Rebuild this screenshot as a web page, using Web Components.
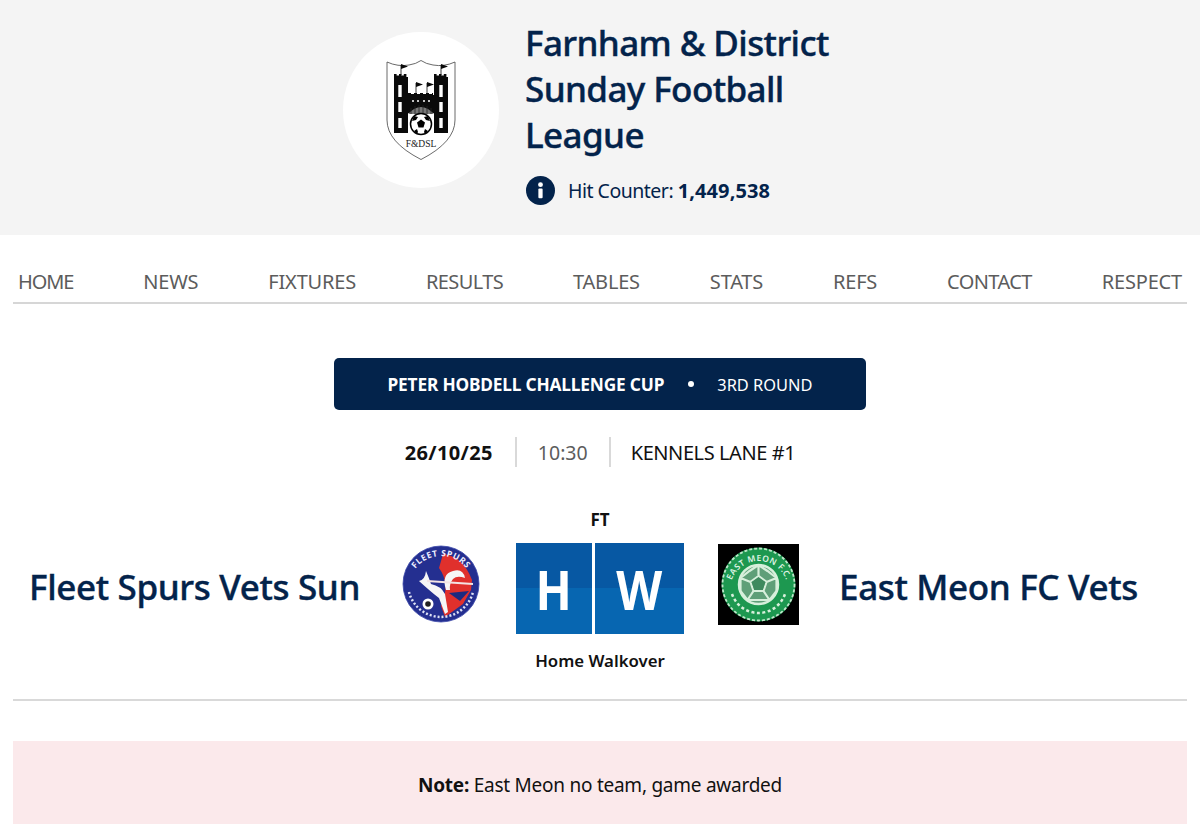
<!DOCTYPE html>
<html lang="en"><head><meta charset="utf-8"><title>Match</title>
<style>
html,body{margin:0;padding:0;background:#fff}
body{font-family:"Noto Sans","Open Sans",sans-serif;width:1200px;height:832px;overflow:hidden}
</style></head><body>
<league-header></league-header>
<main-nav></main-nav>
<cup-banner><b slot="a">PETER HOBDELL CHALLENGE CUP</b><span slot="b">3RD ROUND</span></cup-banner>
<match-meta></match-meta>
<score-board></score-board>
<note-box><b>Note:</b> East Meon no team, game awarded</note-box>

<template id="crest"><svg viewBox="0 0 70 100" width="70" height="100" xmlns="http://www.w3.org/2000/svg">
<path d="M1 2Q12 7 23 5Q30 4 35 .5Q40 4 47 5Q58 7 69 2V60Q69 82 35 99.500Q1 82 1 60Z" fill="#fff" stroke="#444" stroke-width=".8"/>
<g fill="#0a0a0a"><path d="M8 17H22V35H48V17H62V73H8Z"/>
<path d="M8 17v-3h2.600v1.500h2.400v-1.500h2.400v1.500h2.400v-1.500h2.600v3zM48 17v-3h2.600v1.500h2.400v-1.500h2.400v1.500h2.400v-1.500h2.600v3zM22 35v-2h3v1h3v-1h3v1h3v-1h3v1h3v-1h3v1h3v-1h1v2z"/>
<path d="M15 15V5M55 15V5M30 33V23M41 33V23" stroke="#0a0a0a" stroke-width=".8"/>
<path d="M15 4l7 2.500-7 2.500zM55 4l7 2.500-7 2.500zM30 22l7 2.500-7 2.500zM41 22l7 2.500-7 2.500z"/></g>
<g fill="#fff"><rect x="12.300" y="25" width="3.400" height="12"/><rect x="12.300" y="42" width="3.400" height="10"/><rect x="12.300" y="58" width="3.400" height="10"/><rect x="53.300" y="25" width="3.400" height="12"/><rect x="53.300" y="42" width="3.400" height="10"/><rect x="53.300" y="58" width="3.400" height="10"/><circle cx="27" cy="41" r="1"/><circle cx="32" cy="41" r="1"/><circle cx="38" cy="41" r="1"/><circle cx="43" cy="41" r="1"/><rect x="22" y="53" width="26" height="20"/></g>
<path d="M22 54Q35 40 48 54Z" fill="#777"/><path d="M25 54V48M29 54V46M33 54V45M37 54V45M41 54V46M45 54V48" stroke="#222" stroke-width=".8"/>
<circle cx="35" cy="64" r="10.500" fill="#fff" stroke="#000" stroke-width="1.500"/><path d="M35 59.500l4 3-1.500 5h-5L31 62.500zM28 56l4 1-2 3-4 1zM42 56l-4 1 2 3 4 1zM28 71l3-2 1 3-1 2zM42 71l-3-2-1 3 1 2z" fill="#000"/>
<text x="35" y="86.500" text-anchor="middle" font-family="Liberation Serif" font-size="9.500" fill="#222">F&amp;DSL</text></svg></template>

<script>
function def(name,css,html){customElements.define(name,class extends HTMLElement{constructor(){super();this.attachShadow({mode:'open'}).innerHTML='<style>'+css+'</style>'+html}})}
const crest=document.getElementById('crest').innerHTML;
def('league-header',`
:host{display:flex;height:235px;background:#f4f4f4;color:#03234b;box-sizing:border-box;padding:32px 0 0 343px;gap:26px}
.c{width:156px;height:156px;border-radius:50%;background:#fff;display:flex;align-items:center;justify-content:center;flex:none}
.c svg{width:70px;height:100px}
h1{margin:-12px 0 0;font-size:35px;line-height:46px;font-weight:500;width:330px;letter-spacing:-.6px;-webkit-text-stroke:.4px #03234b}
.h{display:flex;align-items:center;gap:13px;font-size:19.500px;letter-spacing:-.5px;margin:17px 0 0 1px;height:30px}
.i{width:29px;height:29px;flex:none}
b{font-weight:700;font-size:20px;letter-spacing:.1px}
`,`<div class="c">${crest}</div><div><h1>Farnham &amp; District Sunday Football League</h1><div class="h"><svg class="i" viewBox="0 0 30 30"><circle cx="15" cy="15" r="15" fill="#03234b"/><rect x="12.800" y="13" width="4.400" height="10" rx="1" fill="#fff"/><circle cx="15" cy="9" r="2.500" fill="#fff"/></svg><span>Hit Counter: <b>1,449,538</b></span></div></div>`);
def('main-nav',`
:host{display:flex;justify-content:space-between;margin:0 13px;padding:34px 5px 0;height:69px;box-sizing:border-box;border-bottom:2px solid #d6d6d6;color:#5c5c5c;font-size:20px;letter-spacing:-.2px;line-height:26px}
.tight{letter-spacing:-1.100px}
.snug{letter-spacing:-.6px}
`,[['HOME','tight'],['NEWS',''],['FIXTURES',''],['RESULTS','snug'],['TABLES',''],['STATS',''],['REFS',''],['CONTACT','snug'],['RESPECT','']].map(t=>`<span class="${t[1]}">${t[0]}</span>`).join(''));
def('cup-banner',`
:host{display:flex;align-items:center;justify-content:center;width:532px;height:52px;margin:54px 0 0 334px;background:#03234b;color:#fff;border-radius:5px;font-size:17.300px}
::slotted(b){font-weight:700;letter-spacing:-.17px}
::slotted(span){font-weight:400;font-size:16.400px}
i{width:6px;height:6px;border-radius:50%;background:#fff;margin:0 23px 0 24px}
`,`<slot name="a"></slot><i></i><slot name="b"></slot>`);
def('match-meta',`
:host{display:flex;justify-content:center;align-items:center;margin:27px 0 0;height:30px;font-size:20px;color:#111}
span{padding:2px 22px 0;line-height:28px}
span:first-child{padding-right:23px}
.t{padding-left:21px;padding-right:21px}
span:last-child{padding-left:20px}
span+span{border-left:2px solid #d9d9d9}
b{font-weight:700;letter-spacing:.35px}
.t{color:#5c5c5c;font-size:19.500px}
.k{letter-spacing:-.42px}
`,`<span><b>26/10/25</b></span><span class="t">10:30</span><span class="k">KENNELS LANE #1</span>`);
def('score-board',`
:host{display:flex;flex-direction:column;margin:0 13px;height:234px;box-sizing:border-box;border-bottom:2px solid #d9d9d9}
.row{display:flex;align-items:center;height:91px;margin-top:13px}
.top,.bot{text-align:center;font-size:17px;font-weight:700;color:#111;line-height:20px}
.top{margin-top:43px}
.bot{margin-top:17px;font-size:16.800px;font-weight:600}
.n{font-size:35px;font-weight:500;color:#03234b;white-space:nowrap;line-height:46px;letter-spacing:-.35px;margin-bottom:3px;-webkit-text-stroke:.4px #03234b}
.home{width:347px;text-align:right;margin-right:41px;flex:none}
.away{margin-left:40.500px}
.s{display:flex;gap:2.500px;margin:0 33.500px 0 35px}
.s div{width:76px;height:91px;background:linear-gradient(#0758a3 50%,#0766b1 50%);color:#fff;font-size:54px;font-weight:700;display:flex;align-items:center;justify-content:center}
.s div+div{width:89.500px}
.s span{display:inline-block;transform:scaleX(.88)}
.fleet{margin-bottom:10px;flex:none}
.meon{margin-bottom:8px;flex:none}
`,`<div class="top">FT</div><div class="row"><span class="n home">Fleet Spurs Vets Sun</span>
<svg class="fleet" width="80" height="80" viewBox="0 0 80 80"><defs><path id="ft" d="M8 44A32 32 0 0 1 72 44"/></defs><circle cx="40" cy="40" r="38" fill="#242f90"/>
<path d="M42 10Q62 12 71 36L70 46 62 60 44 73 40 62Q50 40 38 24Z" fill="#e0302c"/>
<path d="M48 49L68 47 59 57Z" fill="#1c2a80"/>
<path d="M25 27Q24 36 18 37 30 48 38 54L44 70 47 68 44 50Q40 42 30 40 28 34 25 27Z" fill="#f6f6f6"/>
<path d="M45 46Q40 30 52 27 62 24 64 34 56 31 52 35 48 40 49 46Z" fill="#f6f6f6"/>
<path d="M26 36L72 39V41L26 38Z" fill="#f3e4e4"/>
<circle cx="27" cy="60" r="5.500" fill="#fff"/><circle cx="27" cy="60" r="2.800" fill="#222"/>
<text font-family="Noto Sans" font-size="8.500" font-weight="700" fill="#eef" letter-spacing=".6"><textPath href="#ft" startOffset="50%" text-anchor="middle">FLEET SPURS</textPath></text>
<path d="M8 48A33 33 0 0 0 72 48" fill="none" stroke="#dfe3f5" stroke-width="2.500" stroke-dasharray="2 2"/><circle cx="40" cy="40" r="38" fill="none" stroke="#3a46a8" stroke-width=".8"/></svg>
<div class="s"><div><span>H</span></div><div><span>W</span></div></div>
<svg class="meon" width="81" height="81" viewBox="0 0 81 81"><defs><path id="mt" d="M12 46A29 29 0 0 1 70 46"/></defs><rect width="81" height="81" fill="#000"/><circle cx="40.500" cy="40.500" r="37" fill="#1d9850"/><circle cx="40.500" cy="40.500" r="36" fill="none" stroke="#bfe6ca" stroke-width="1.800" stroke-dasharray="3 2"/>
<circle cx="40.500" cy="40.500" r="19.500" fill="#5f9f78" stroke="#d7efdb" stroke-width="2.500"/>
<path d="M40.500 32l8 6-3 9h-10l-3-9zM40.500 32V21M48.500 38l10-4M45.500 47l6 9M35.500 47l-6 9M32.500 38l-10-4M40.500 21l-9 6-9 7M40.500 21l9 6 9 7M58.500 34v13l-7 9M22.500 34v13l7 9M29.500 56h22" fill="none" stroke="#d7efdb" stroke-width="2.200"/><path d="M40.500 33l7 5-2.700 8h-8.600l-2.700-8z" fill="#3e8a5e"/>
<text font-family="Noto Sans" font-size="8.500" font-weight="600" fill="#dff3e4" letter-spacing=".5"><textPath href="#mt" startOffset="50%" text-anchor="middle">EAST MEON F.C.</textPath></text>
<path d="M14 50A28 28 0 0 0 67 50" fill="none" stroke="#d7efdb" stroke-width="2.500" stroke-dasharray="3 2.500"/></svg>
<span class="n away">East Meon FC Vets</span></div><div class="bot">Home Walkover</div>`);
def('note-box',`
:host{display:block;margin:40px 13px 0;height:83px;background:#fbe9eb;color:#111;font-size:19px;letter-spacing:-.25px;line-height:88px;text-align:center}
::slotted(b){font-weight:700}
`,`<slot></slot>`);
</script>
</body></html>
